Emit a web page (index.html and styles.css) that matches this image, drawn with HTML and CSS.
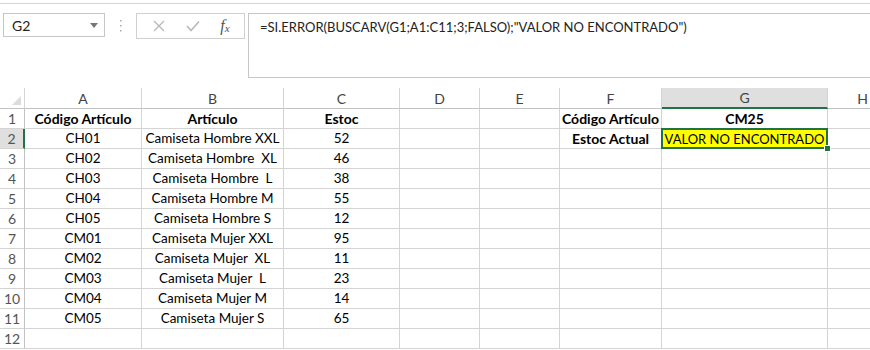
FILE: index.html
```html
<!DOCTYPE html>
<html lang="es">
<head>
    <meta charset="UTF-8">
    <title>BUSCARV con SI.ERROR</title>
    <link rel="stylesheet" href="styles.css">
</head>
<body>
    <header class="toolbar">
        <div class="namebox">
            <span>G2</span>
            <svg class="arrow" width="8" height="5" viewBox="0 0 8 5"><path d="M0 0h8L4 5z" fill="#777"/></svg>
        </div>
        <svg class="grip" width="3" height="13" viewBox="0 0 3 13">
            <rect x="1" y="0" width="1.5" height="1.5" fill="#aaa"/>
            <rect x="1" y="5" width="1.5" height="1.5" fill="#aaa"/>
            <rect x="1" y="10" width="1.5" height="1.5" fill="#aaa"/>
        </svg>
        <div class="fxbuttons">
            <svg width="12" height="12" viewBox="0 0 12 12"><path d="M1 1l10 10M11 1L1 11" stroke="#b9b9b9" stroke-width="1.4"/></svg>
            <svg width="14" height="12" viewBox="0 0 14 12"><path d="M1 6l4 4.5L13 1.5" stroke="#b9b9b9" stroke-width="1.6" fill="none"/></svg>
            <span class="fx">f<sub>x</sub></span>
        </div>
        <div class="formula">=SI.ERROR(BUSCARV(G1;A1:C11;3;FALSO);"VALOR NO ENCONTRADO")</div>
    </header>

    <main class="sheet">
        <div class="hd corner"><svg width="9" height="9" viewBox="0 0 9 9"><path d="M9 0v9H0z" fill="#dcdcdc"/></svg></div>
        <div class="hd">A</div>
        <div class="hd">B</div>
        <div class="hd">C</div>
        <div class="hd">D</div>
        <div class="hd">E</div>
        <div class="hd">F</div>
        <div class="hd active-col">G</div>
        <div class="hd">H</div>

        <div class="rn">1</div>
        <div class="c b">Código Artículo</div><div class="c b">Artículo</div><div class="c b">Estoc</div><div class="c"></div><div class="c"></div>
        <div class="c b">Código Artículo</div><div class="c b">CM25</div><div class="c"></div>

        <div class="rn active-row">2</div>
        <div class="c">CH01</div><div class="c">Camiseta Hombre XXL</div><div class="c">52</div><div class="c"></div><div class="c"></div>
        <div class="c b">Estoc Actual</div><div class="c selected">VALOR NO ENCONTRADO</div><div class="c"></div>

        <div class="rn">3</div>
        <div class="c">CH02</div><div class="c">Camiseta Hombre&nbsp; XL</div><div class="c">46</div><div class="c"></div><div class="c"></div><div class="c"></div><div class="c"></div><div class="c"></div>
        <div class="rn">4</div>
        <div class="c">CH03</div><div class="c">Camiseta Hombre&nbsp; L</div><div class="c">38</div><div class="c"></div><div class="c"></div><div class="c"></div><div class="c"></div><div class="c"></div>
        <div class="rn">5</div>
        <div class="c">CH04</div><div class="c">Camiseta Hombre M</div><div class="c">55</div><div class="c"></div><div class="c"></div><div class="c"></div><div class="c"></div><div class="c"></div>
        <div class="rn">6</div>
        <div class="c">CH05</div><div class="c">Camiseta Hombre S</div><div class="c">12</div><div class="c"></div><div class="c"></div><div class="c"></div><div class="c"></div><div class="c"></div>
        <div class="rn">7</div>
        <div class="c">CM01</div><div class="c">Camiseta Mujer XXL</div><div class="c">95</div><div class="c"></div><div class="c"></div><div class="c"></div><div class="c"></div><div class="c"></div>
        <div class="rn">8</div>
        <div class="c">CM02</div><div class="c">Camiseta Mujer&nbsp; XL</div><div class="c">11</div><div class="c"></div><div class="c"></div><div class="c"></div><div class="c"></div><div class="c"></div>
        <div class="rn">9</div>
        <div class="c">CM03</div><div class="c">Camiseta Mujer&nbsp; L</div><div class="c">23</div><div class="c"></div><div class="c"></div><div class="c"></div><div class="c"></div><div class="c"></div>
        <div class="rn">10</div>
        <div class="c">CM04</div><div class="c">Camiseta Mujer M</div><div class="c">14</div><div class="c"></div><div class="c"></div><div class="c"></div><div class="c"></div><div class="c"></div>
        <div class="rn">11</div>
        <div class="c">CM05</div><div class="c">Camiseta Mujer S</div><div class="c">65</div><div class="c"></div><div class="c"></div><div class="c"></div><div class="c"></div><div class="c"></div>
        <div class="rn">12</div>
        <div class="c"></div><div class="c"></div><div class="c"></div><div class="c"></div><div class="c"></div><div class="c"></div><div class="c"></div><div class="c"></div>
    </main>
</body>
</html>
```

FILE: styles.css
```css
html,
body {
    margin: 0;
    background: #fff;
    overflow: hidden;
}

body {
    font-family: Lato, "Open Sans", sans-serif;
    color: #000;
}

.toolbar {
    margin-top: 3px;
    height: 85px;
    box-sizing: border-box;
    border-top: 1px solid #d5d5d5;
    padding: 9px 0 0 3px;
    display: flex;
    align-items: flex-start;
}

.namebox {
    width: 102px;
    height: 24px;
    box-sizing: border-box;
    border: 1px solid #c6c6c6;
    display: flex;
    align-items: center;
    justify-content: space-between;
    padding: 0 6px 0 8px;
    font-size: 14px;
    color: #222;
}

.grip {
    margin: 7px 14px 0 14px;
}

.fxbuttons {
    width: 109px;
    height: 26px;
    box-sizing: border-box;
    border: 1px solid #d0d0d0;
    display: flex;
    align-items: center;
    justify-content: space-around;
    padding: 0 4px 0 6px;
}

.fx {
    font-family: "Liberation Serif", serif;
    font-style: italic;
    font-size: 16px;
    color: #555;
    line-height: 1;
}

.fx sub {
    font-size: 11px;
    vertical-align: -1px;
}

.formula {
    margin-left: 3px;
    flex: 1;
    height: 65px;
    box-sizing: border-box;
    border: 1px solid #c6c6c6;
    border-right: none;
    padding: 5px 11px;
    font-size: 13px;
    color: #222;
    white-space: nowrap;
}

.sheet {
    display: grid;
    grid-template-columns: 25px 117px 142px 116px 80px 80px 102px 166px 70px;
    grid-template-rows: 21px;
    grid-auto-rows: 20px;
    font-size: 13.5px;
}

.sheet > div {
    box-sizing: border-box;
    border-right: 1px solid #d4d4d4;
    border-bottom: 1px solid #d4d4d4;
    display: flex;
    align-items: center;
    justify-content: center;
    white-space: nowrap;
    line-height: 1;
    padding-top: 1px;
}

.hd {
    color: #444;
    font-size: 14px;
    border-bottom-color: #c2c2c2 !important;
}

.corner {
    justify-content: flex-end !important;
    align-items: flex-end !important;
    padding: 0 3px 3px 0;
}

.active-col {
    background: #dfdfdf;
    border-bottom: 2px solid #217346 !important;
}

.rn {
    color: #555;
    font-size: 14px;
    border-right-color: #c2c2c2 !important;
}

.active-row {
    background: #dfdfdf;
    border-right: 2px solid #217346 !important;
}

.b {
    font-weight: bold;
    font-size: 14px;
}

.selected {
    position: relative;
    background: #ffff00;
    font-size: 13px;
}

.selected::before {
    content: "";
    position: absolute;
    left: -1px;
    top: -1px;
    right: -1px;
    bottom: -1px;
    border: 2px solid #217346;
}

.selected::after {
    content: "";
    position: absolute;
    right: -4px;
    bottom: -4px;
    width: 5px;
    height: 5px;
    background: #217346;
    border: 1px solid #fff;
}
```
